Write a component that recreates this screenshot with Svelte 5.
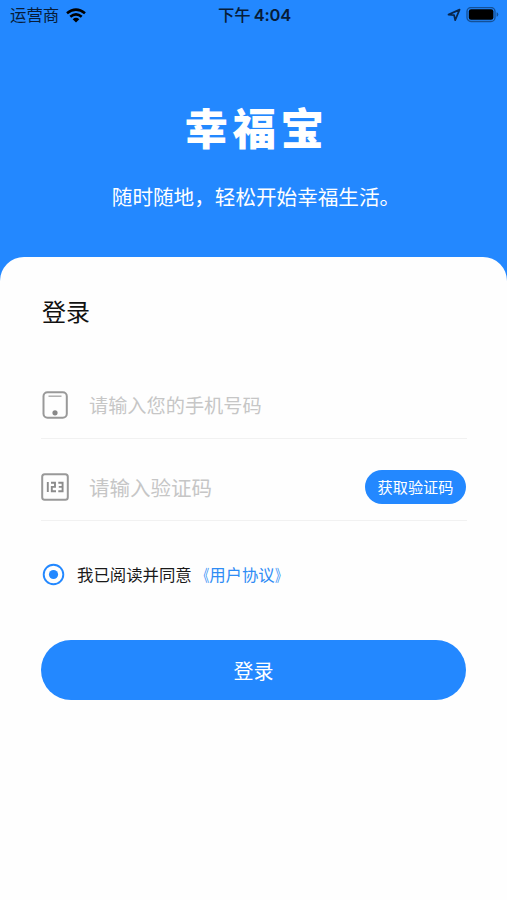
<script>
  let phone = "";
  let code = "";
  let agreed = true;
</script>

<style>
  :global(body) {
    margin: 0;
    background: #fefefe;
  }
  .page {
    box-sizing: border-box;
    height: 900px;
    overflow: hidden;
    background: #2388ff;
    font-family: "Noto Sans CJK SC", "Noto Sans", sans-serif;
    color: #1a1a1a;
  }
  .status {
    display: grid;
    grid-template-columns: 1fr auto 1fr;
    align-items: center;
    height: 30px;
    padding: 0 8px 0 10px;
    box-sizing: border-box;
    color: #071c38;
    font-size: 16.4px;
    line-height: 28px;
  }
  .carrier,
  .power {
    display: flex;
    align-items: center;
  }
  .carrier span {
    padding-bottom: 2px;
  }
  .carrier svg {
    margin-left: 7px;
  }
  .power {
    justify-content: flex-end;
    gap: 5px;
  }
  .time {
    display: flex;
    gap: 3px;
    font-weight: 500;
  }
  .time b {
    font-family: Inter, sans-serif;
    font-weight: 600;
    font-size: 16.5px;
    line-height: 30px;
    letter-spacing: -0.2px;
  }
  .hero {
    height: 227px;
    text-align: center;
    color: white;
  }
  h1 {
    margin: 0;
    padding: 67px 0 0 6px;
    font-size: 43.5px;
    line-height: 60px;
    font-weight: 900;
    letter-spacing: 4.5px;
  }
  .hero p {
    margin: 0;
    padding: 24px 0 0 5px;
    font-size: 20.6px;
    line-height: 30px;
  }
  .card {
    box-sizing: border-box;
    height: 643px;
    padding: 36px 40px 0 41px;
    border-radius: 24px 24px 0 0;
    background: #fefefe;
  }
  h2 {
    margin: 0;
    padding-left: 1px;
    font-size: 24px;
    line-height: 35px;
    font-weight: 400;
    color: #111;
  }
  .field {
    box-sizing: border-box;
    display: flex;
    align-items: center;
    height: 82px;
    padding-top: 14px;
    border-bottom: 1px solid #f1f1f1;
  }
  .field.first {
    height: 82px;
    margin-top: 29px;
  }
  .field svg {
    flex: none;
    margin-right: 20px;
  }
  input {
    flex: 1;
    min-width: 0;
    height: 32px;
    padding: 0;
    border: 0;
    outline: 0;
    background: none;
    font-family: inherit;
    font-size: 20.5px;
  }
  .first input {
    font-size: 19.2px;
  }
  input::placeholder {
    color: #c6c6c6;
    opacity: 1;
  }
  button {
    padding: 0;
    border: 0;
    background: #2388ff;
    color: white;
    font-family: inherit;
    cursor: pointer;
  }
  .send {
    width: 101px;
    height: 34px;
    margin-right: 1px;
    padding-bottom: 2px;
    border-radius: 17px;
    font-size: 15.2px;
  }
  .agreement {
    display: flex;
    align-items: center;
    height: 30px;
    margin-top: 38px;
    font-size: 16.4px;
    line-height: 28px;
  }
  .radio {
    display: flex;
    margin: 0 12px 0 1px;
    background: none;
  }
  .agreement a {
    display: flex;
    margin-left: 1px;
    color: #2f8cf5;
    text-decoration: none;
  }
  .mark {
    transform: scaleX(0.72);
    transform-origin: right;
  }
  .mark.end {
    transform-origin: left;
  }
  .login {
    display: block;
    width: 425px;
    height: 60px;
    margin-top: 51px;
    border-radius: 30px;
    font-size: 20px;
  }
</style>

<div class="page">
  <div class="status">
    <div class="carrier">
      <span>运营商</span>
      <svg width="20" height="15" viewBox="0 0 20 15" fill="none" stroke="#000" stroke-width="2.6">
        <path d="M1 5.3Q10-2.2 19 5.3" />
        <path d="M4.3 8.8Q10 4 15.7 8.8" />
        <path d="M6.7 11.3Q10 8.4 13.3 11.3L10 14.5Z" fill="#000" stroke="none" />
      </svg>
    </div>
    <div class="time"><span>下午</span><b>4:04</b></div>
    <div class="power">
      <svg width="14" height="14" viewBox="0 0 14 14" fill="none" stroke="#08264d" stroke-width="1.7" stroke-linejoin="round">
        <path d="M1.5 6.6L12.6 1.6L8.2 12.2L7.1 7.2Z" />
      </svg>
      <svg width="33" height="16" viewBox="0 0 33 16">
        <rect x="1" y="0.5" width="28" height="14" rx="4" fill="none" stroke="#145097" stroke-width="1.3" />
        <rect x="2.8" y="2.3" width="24.6" height="10.4" rx="2.3" fill="#000" />
        <path d="M30.6 5.2Q32.3 5.7 32.3 7.5T30.6 9.8Z" fill="#145097" />
      </svg>
    </div>
  </div>

  <div class="hero">
    <h1>幸福宝</h1>
    <p>随时随地，轻松开始幸福生活。</p>
  </div>

  <div class="card">
    <h2>登录</h2>

    <div class="field first">
      <svg width="28" height="28" viewBox="0 0 28 28" fill="none" stroke="#999" stroke-width="2">
        <rect x="2.5" y="1.2" width="23.3" height="25.6" rx="4" />
        <path d="M7.5 5.2H20.5" stroke="#aaa" stroke-width="1.4" />
        <circle cx="14" cy="21.8" r="2.6" fill="#888" stroke="none" />
      </svg>
      <input type="tel" placeholder="请输入您的手机号码" bind:value={phone} />
    </div>

    <div class="field">
      <svg width="28" height="28" viewBox="0 0 28 28" fill="none" stroke="#999" stroke-width="2">
        <rect x="1.2" y="1.2" width="25.6" height="25.6" rx="2.5" />
        <path d="M6.8 9V19M10 9.8H14V13.9H10.8V18.2H15M17.3 9.8H21.6V18.2H17.3M17.8 13.9H21.6" stroke="#8c8c8c" stroke-width="1.9" />
      </svg>
      <input type="text" placeholder="请输入验证码" bind:value={code} />
      <button class="send">获取验证码</button>
    </div>

    <div class="agreement">
      <button class="radio" aria-label="同意" on:click={() => (agreed = !agreed)}>
        <svg width="23" height="23" viewBox="0 0 23 23">
          <circle cx="11.5" cy="11.5" r="9.8" fill="none" stroke="#2388ff" stroke-width="1.9" />
          {#if agreed}
            <circle cx="11.5" cy="11.5" r="4.6" fill="#2388ff" />
          {/if}
        </svg>
      </button>
      <span>我已阅读并同意</span>
      <a href="#agreement"><span class="mark">《</span>用户协议<span class="mark end">》</span></a>
    </div>

    <button class="login">登录</button>
  </div>
</div>
